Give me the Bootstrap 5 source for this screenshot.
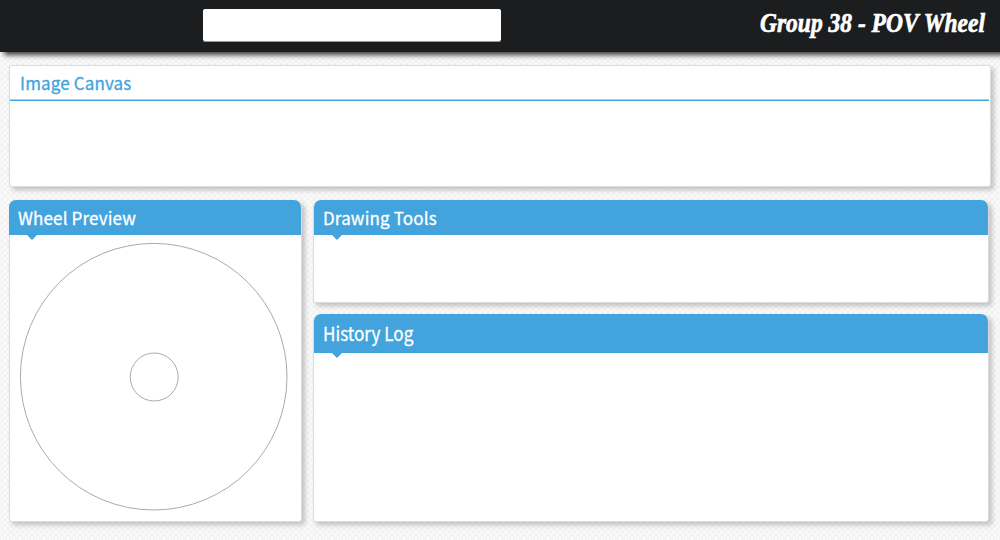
<!DOCTYPE html>
<html lang="en">
<head>
<meta charset="utf-8">
<title>Group 38 - POV Wheel</title>
<meta name="viewport" content="width=device-width, initial-scale=1">
<link href="https://cdn.jsdelivr.net/npm/bootstrap@5.3.0/dist/css/bootstrap.min.css" rel="stylesheet">
<style>
body{height:540px;overflow:hidden;font-family:"Noto Sans CJK JP","Open Sans",sans-serif;
 background-color:#f9f9f9;
 background-image:repeating-linear-gradient(45deg,rgba(0,0,0,.035) 0 1px,transparent 1px 4.243px),repeating-linear-gradient(-45deg,rgba(0,0,0,.035) 0 1px,transparent 1px 4.243px)}
.topbar{height:52px;background:#1c1d1f;padding:9px 15px 0 203px;box-shadow:4px 3px 5px rgba(0,0,0,.75)}
.topbar .form-control{width:298px;height:33px;border:0;border-bottom:1px solid #999;border-radius:2px}
.brand{font:italic bold 23.500px/30px "Liberation Serif",serif;color:#fff;white-space:nowrap;-webkit-text-stroke:.6px #fff;transform:scaleY(1.12);margin-top:-1px}
.panel{border:1px solid #dcdcdc;border-radius:3px;background:#fff;box-shadow:3px 3px 5px rgba(0,0,0,.22)}
.canvas-panel{width:982px;height:122px;margin:13px 0 0 9px}
.canvas-title{height:35px;color:#42a3dd;padding-left:10px;margin-right:1px;background:linear-gradient(#a0d1ee,#a0d1ee) 0 33px/100% 1px no-repeat,linear-gradient(#42a3dd,#42a3dd) 0 34px/100% 1px no-repeat}
.title-text{font-size:17px;line-height:35px;margin:0;font-weight:400;white-space:nowrap;letter-spacing:.15px;-webkit-text-stroke:.3px currentColor}
.canvas-title .title-text{line-height:34px}
.boards{margin:13px 0 0 9px;gap:12px}
.wheel-panel{width:293px;height:322px}
.side{width:676px;gap:11px;margin-left:-1px}
.tools-panel{height:103px}
.log-panel{height:208px}
.board{border-radius:7px 7px 3px 3px;border-top:0}
.wheel-panel .board-head{margin-left:-1px}
.board-head{height:35px;background:#42a3dd;color:#fff;border-radius:7px 7px 0 0;padding-left:9px}
.board-head::after{content:"";position:absolute;left:18px;top:100%;border:5px solid transparent;border-top-color:#42a3dd;border-bottom:0}
.log-panel .board-head{height:39px}
.log-panel .title-text{font-size:19px;line-height:38px;letter-spacing:0;transform:scaleX(.9);transform-origin:0 50%}
</style>
</head>
<body>
<header class="topbar d-flex justify-content-between align-items-start">
 <input class="form-control" type="text" aria-label="Search">
 <div class="brand">Group 38 - POV Wheel</div>
</header>
<main>
 <section class="panel canvas-panel">
  <div class="canvas-title"><h2 class="title-text">Image Canvas</h2></div>
 </section>
 <div class="boards d-flex">
  <section class="panel board wheel-panel">
   <div class="board-head position-relative"><h2 class="title-text">Wheel Preview</h2></div>
   <svg class="d-block" width="290" height="284" fill="none" stroke="#aaa"><circle cx="143.700" cy="141.700" r="133.300"/><circle cx="144.200" cy="142" r="24"/></svg>
  </section>
  <div class="side d-flex flex-column">
   <section class="panel board tools-panel">
    <div class="board-head position-relative"><h2 class="title-text">Drawing Tools</h2></div>
   </section>
   <section class="panel board log-panel">
    <div class="board-head position-relative"><h2 class="title-text">History Log</h2></div>
   </section>
  </div>
 </div>
</main>
<script src="https://cdn.jsdelivr.net/npm/bootstrap@5.3.0/dist/js/bootstrap.bundle.min.js"></script>
</body>
</html>
